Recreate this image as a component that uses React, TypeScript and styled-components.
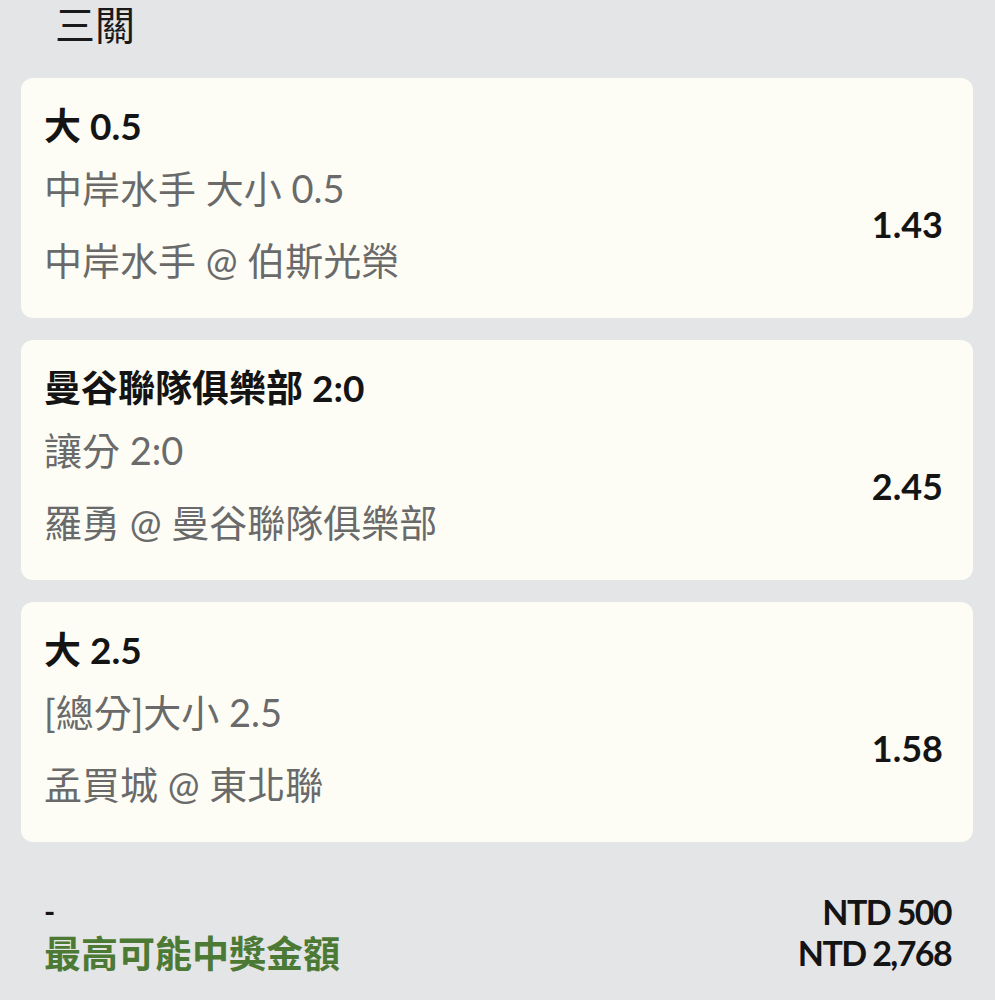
import React from "react";
import styled, { createGlobalStyle } from "styled-components";

const Global = createGlobalStyle`
  html, body { margin: 0; padding: 0; background: #e4e5e7; }
  body { font-family: Lato, "Noto Sans CJK TC", sans-serif; }
`;

const Page = styled.div`
  width: 995px;
  min-height: 1000px;
  background: #e4e5e7;
  box-sizing: border-box;
  padding: 0 22px 0 21px;
`;

const Heading = styled.div`
  font-size: 40px;
  line-height: 50px;
  color: #1a1a1a;
  padding-left: 34px;
  margin-bottom: 28px;
`;

const CardList = styled.div`
  display: flex;
  flex-direction: column;
  gap: 22px;
`;

const Card = styled.div`
  background: #fdfdf6;
  border-radius: 12px;
  padding: 28px 30px 32px 23px;
  height: 240px;
  box-sizing: border-box;
`;

const Title = styled.div`
  font-size: 37px;
  line-height: 40px;
  font-weight: 700;
  color: #141414;
`;

const Body = styled.div`
  display: flex;
  align-items: center;
  justify-content: space-between;
  margin-top: 16px;
`;

const Lines = styled.div`
  display: flex;
  flex-direction: column;
  gap: 20px;
`;

const Sub = styled.div`
  font-size: 38px;
  line-height: 52px;
  color: #6a6a6a;
`;

const Odds = styled.div`
  font-size: 36px;
  font-weight: 700;
  color: #141414;
`;

const Footer = styled.div`
  display: flex;
  justify-content: space-between;
  align-items: flex-start;
  padding: 49px 22px 0 23px;
`;

const FooterLeft = styled.div`
  display: flex;
  flex-direction: column;
`;

const Dash = styled.div`
  font-size: 30px;
  line-height: 40px;
  font-weight: 700;
  color: #141414;
`;

const Green = styled.div`
  font-size: 37px;
  line-height: 46px;
  font-weight: 700;
  color: #4c7a35;
`;

const FooterRight = styled.div`
  display: flex;
  flex-direction: column;
  align-items: flex-end;
`;

const Amount = styled.div<{ $h: number }>`
  font-size: 34px;
  line-height: ${(p) => p.$h}px;
  font-weight: 700;
  letter-spacing: -1.6px;
  color: #141414;
`;

const bets = [
  { title: "大 0.5", sub1: "中岸水手 大小 0.5", sub2: "中岸水手 @ 伯斯光榮", odds: "1.43" },
  { title: "曼谷聯隊俱樂部 2:0", sub1: "讓分 2:0", sub2: "羅勇 @ 曼谷聯隊俱樂部", odds: "2.45" },
  { title: "大 2.5", sub1: "[總分]大小 2.5", sub2: "孟買城 @ 東北聯", odds: "1.58" },
];

export default function App() {
  return (
    <>
      <Global />
      <Page>
        <Heading>三關</Heading>
        <CardList>
          {bets.map((b) => (
            <Card key={b.title}>
              <Title>{b.title}</Title>
              <Body>
                <Lines>
                  <Sub>{b.sub1}</Sub>
                  <Sub>{b.sub2}</Sub>
                </Lines>
                <Odds>{b.odds}</Odds>
              </Body>
            </Card>
          ))}
        </CardList>
        <Footer>
          <FooterLeft>
            <Dash>-</Dash>
            <Green>最高可能中獎金額</Green>
          </FooterLeft>
          <FooterRight>
            <Amount $h={42}>NTD 500</Amount>
            <Amount $h={40}>NTD 2,768</Amount>
          </FooterRight>
        </Footer>
      </Page>
    </>
  );
}
